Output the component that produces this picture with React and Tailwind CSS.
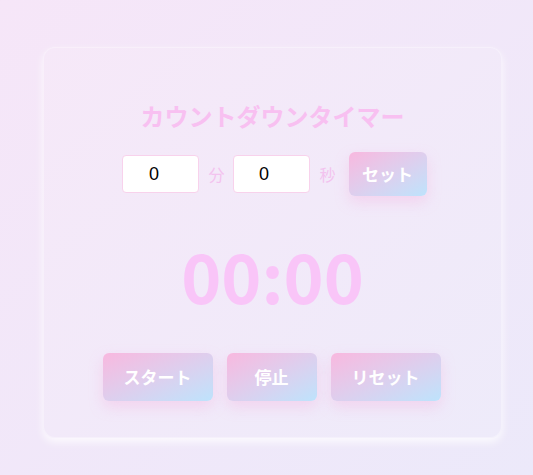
export default function App() {
  const btn =
    'rounded-md bg-gradient-to-br from-[#f8b8df] to-[#bde3fc] text-white font-bold text-[17px] shadow-[0_6px_14px_rgba(246,170,220,0.35)] flex items-center justify-center';
  const inp =
    'w-[77px] h-[38px] bg-white border border-[#f8d2ec] rounded-[4px] text-center text-[18px] text-black outline-none pr-[14px]';
  return (
    <div
      className="w-[533px] h-[475px] bg-gradient-to-br from-[#f6e6f8] to-[#ece9fa] pt-[47px] pl-[43px]"
      style={{ fontFamily: '"Noto Sans CJK JP", "Noto Sans", sans-serif' }}
    >
      <div className="w-[459px] h-[391px] rounded-[12px] border border-white/30 bg-white/10 shadow-[0_4px_8px_rgba(255,255,255,0.8)] flex flex-col items-center pt-[50px]">
        <h1 className="text-[24px] leading-[36px] font-bold text-[#f8c0f1]">カウントダウンタイマー</h1>
        <div className="mt-[18px] flex items-center h-[44px] pl-[4px]">
          <input
            readOnly
            value="0"
            className={inp}
            style={{ fontFamily: '"Liberation Sans", Arial, sans-serif' }}
          />
          <span className="ml-[9px] mr-[8px] text-[16px] text-[#f3c3ef]">分</span>
          <input
            readOnly
            value="0"
            className={inp}
            style={{ fontFamily: '"Liberation Sans", Arial, sans-serif' }}
          />
          <span className="ml-[10px] mr-[13px] text-[16px] text-[#f3c3ef]">秒</span>
          <button className={`${btn} w-[78px] h-[44px] text-[16px]`}>セット</button>
        </div>
        <div className="mt-[40px] text-[68px] leading-[78px] font-bold text-[#f9c5f8]">00:00</div>
        <div className="mt-[39px] flex gap-[14px] pr-[2px]">
          <button className={`${btn} w-[110px] h-[48px]`}>スタート</button>
          <button className={`${btn} w-[90px] h-[48px]`}>停止</button>
          <button className={`${btn} w-[110px] h-[48px]`}>リセット</button>
        </div>
      </div>
    </div>
  );
}
